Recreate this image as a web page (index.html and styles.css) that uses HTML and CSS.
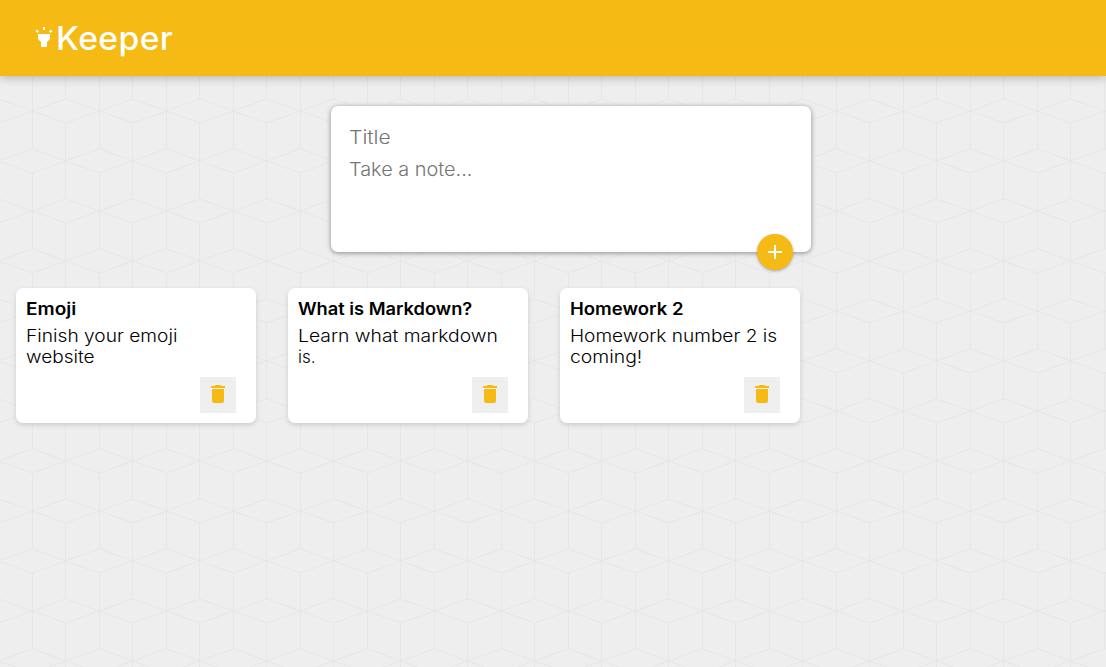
FILE: index.html
```html
<!DOCTYPE html>
<html lang="en">
<head>
<meta charset="utf-8">
<title>Keeper</title>
<link rel="stylesheet" href="styles.css">
</head>
<body>
<header class="header">
  <svg class="icon" viewBox="0 0 24 24"><path d="M6 14l3 3v5h6v-5l3-3V9H6zm5-12h2v3h-2zM3.5 5.875L4.914 4.46l2.12 2.122L5.62 7.997zm13.46.71l2.123-2.12 1.414 1.414L18.375 8z"/></svg>
  <h1 class="logo">Keeper</h1>
</header>
<main>
  <form class="create">
    <div class="field"><span class="wide ph-title">Title</span></div>
    <div class="field"><span class="wide ph-note">Take a note...</span></div>
    <button class="add" type="button" aria-label="Add"><svg class="icon" viewBox="0 0 24 24"><path d="M19 13h-6v6h-2v-6H5v-2h6V5h2v6h6v2z"/></svg></button>
  </form>
  <section class="notes">
    <article class="note">
      <h2 class="title"><span class="wide t-emoji">Emoji</span></h2>
      <p class="text"><span class="wide l-finish">Finish your emoji</span><br><span class="wide l-website">website</span></p>
      <button class="delete" type="button" aria-label="Delete"><svg class="icon" viewBox="0 0 24 24"><path d="M6 19c0 1.1.9 2 2 2h8c1.1 0 2-.9 2-2V7H6v12zM19 4h-3.5l-1-1h-5l-1 1H5v2h14V4z"/></svg></button>
    </article>
    <article class="note">
      <h2 class="title"><span class="wide t-markdown">What is Markdown?</span></h2>
      <p class="text"><span class="wide l-learn">Learn what markdown</span><br><span class="wide">is.</span></p>
      <button class="delete" type="button" aria-label="Delete"><svg class="icon" viewBox="0 0 24 24"><path d="M6 19c0 1.1.9 2 2 2h8c1.1 0 2-.9 2-2V7H6v12zM19 4h-3.5l-1-1h-5l-1 1H5v2h14V4z"/></svg></button>
    </article>
    <article class="note">
      <h2 class="title"><span class="wide t-homework">Homework 2</span></h2>
      <p class="text"><span class="wide l-number">Homework number 2 is</span><br><span class="wide l-coming">coming!</span></p>
      <button class="delete" type="button" aria-label="Delete"><svg class="icon" viewBox="0 0 24 24"><path d="M6 19c0 1.1.9 2 2 2h8c1.1 0 2-.9 2-2V7H6v12zM19 4h-3.5l-1-1h-5l-1 1H5v2h14V4z"/></svg></button>
    </article>
  </section>
</main>
</body>
</html>
```
FILE: styles.css
```css
* { box-sizing: border-box; margin: 0; padding: 0; }
html { height: 100%; overflow: hidden; }
body {
  min-height: 100%;
  font-family: Inter, "Open Sans", sans-serif;
  background: #eee url("data:image/svg+xml,%3Csvg xmlns='http://www.w3.org/2000/svg' width='67' height='100'%3E%3Cg fill='none' stroke='%23e6e6e6' stroke-width='1'%3E%3Cpath d='M32.5 0V48.7M32.5 73V100M65.5 23V99'/%3E%3Cpath d='M-1.5 61L32.5 48.7L65.5 61L32.5 73L-1.5 61M65.5 61L99.5 48.7M65.5 61L99.5 73M32.5 11L65.5 -1.2L99.5 11L65.5 23L32.5 11L-1.5 -1.2M32.5 11L-1.5 23M32.5 111L65.5 98.8L99.5 111M32.5 111L-1.5 98.8'/%3E%3C/g%3E%3C/svg%3E");
}
button { border: 0; }
.icon { display: block; width: 24px; height: 24px; fill: currentColor; }
.header {
  display: flex;
  height: 76px;
  padding: 0 32px;
  color: #fff;
  background: #f5ba13;
  box-shadow: 0 2px 9px 0 rgba(0,0,0,.24);
}
.header .icon { margin-top: 25px; }
.logo {
  padding-top: 1px;
  font: 500 32px/76px Inter, sans-serif;
  letter-spacing: .4px;
  transform: scaleX(1.05);
  transform-origin: 0 50%;
}
.create {
  position: relative;
  width: 480px;
  height: 146px;
  margin: 30px 0 0 331px;
  padding: 15px 18px;
  background: #fff;
  border-radius: 7px;
  box-shadow: 0 1px 5px rgb(138,137,137);
  color: #757575;
  font-size: 18.5px;
  font-weight: 300;
}
.field { height: 32px; line-height: 32px; white-space: nowrap; }

/* Widened lettering */
.wide { display: inline-block; transform-origin: 0 50%; }
.ph-title { transform: scaleX(1.14); }
.ph-note { transform: scaleX(1.075); }
.t-emoji { transform: scaleX(1.12); }
.t-markdown { transform: scaleX(1.074); }
.t-homework { transform: scaleX(1.09); }
.l-finish { transform: scaleX(1.127); }
.l-website { transform: scaleX(1.12); }
.l-learn { transform: scaleX(1.136); }
.l-number { transform: scaleX(1.122); }
.l-coming { transform: scaleX(1.14); }

.add {
  position: absolute;
  right: 18px;
  bottom: -18px;
  display: grid;
  place-items: center;
  width: 36px;
  height: 36px;
  color: #fff;
  background: #f5ba13;
  border-radius: 50%;
  box-shadow: 0 1px 3px rgba(0,0,0,.3);
}
.notes { display: flex; gap: 32px; padding: 36px 16px; }
.note {
  display: flex;
  flex-direction: column;
  width: 240px;
  height: 135px;
  padding: 10px;
  background: #fff;
  border-radius: 7px;
  box-shadow: 0 2px 5px #ccc;
  white-space: nowrap;
}
.title { font-size: 17px; font-weight: 600; line-height: 22px; margin-bottom: 6px; }
.text { font-size: 17px; font-weight: 300; line-height: 21px; }
.delete {
  display: grid;
  place-items: center;
  width: 36px;
  height: 36px;
  margin: auto 10px 0 auto;
  padding-bottom: 2px;
  color: #f5ba13;
  background: #efefef;
}
```
